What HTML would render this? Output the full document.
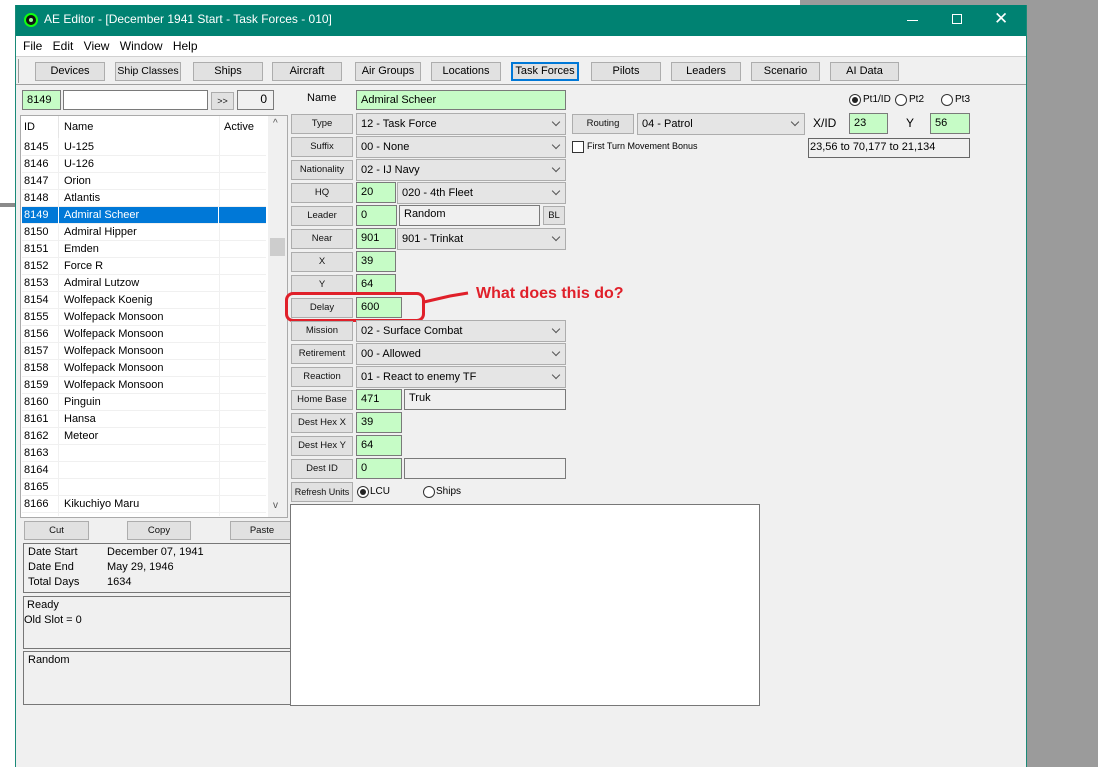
<!DOCTYPE html>
<html><head><meta charset="utf-8"><style>
*{box-sizing:border-box;margin:0;padding:0}
body{width:1098px;height:767px;position:relative;overflow:hidden;background:#fff;font-family:"Liberation Sans",sans-serif;font-size:11px;color:#000}
.a{position:absolute;white-space:nowrap}
.btn{position:absolute;white-space:nowrap;overflow:hidden;background:#e1e1e1;border:1px solid #adadad;text-align:center;font-size:9.5px;line-height:18px;color:#111}
.tb{position:absolute;white-space:nowrap;top:62px;height:19px;background:#e1e1e1;border:1px solid #adadad;text-align:center;font-size:11px;line-height:17px}
.g{position:absolute;background:#c6fcc6;border:1px solid #7a7a7a;padding-left:4px;font-size:11px;line-height:18px}
.cb{position:absolute;white-space:nowrap;background:#e5e5e5;border:1px solid #adadad;padding-left:4px;font-size:11px;line-height:20px}
.cb:after{content:"";position:absolute;right:6px;top:5px;width:5px;height:5px;border-right:1px solid #555;border-bottom:1px solid #555;transform:rotate(45deg)}
.tx{position:absolute;background:#f0f0f0;border:1px solid #7a7a7a;padding-left:4px;font-size:11px;line-height:17px}
.row{position:absolute;left:22px;width:244px;height:17px;border-bottom:1px solid #f0f0f0;font-size:11px;line-height:16px}
.row span{position:absolute}
.rad{position:absolute;width:12px;height:12px;border:1px solid #333;border-radius:50%;background:#fff}
.rad.on:after{content:"";position:absolute;left:2px;top:2px;width:6px;height:6px;border-radius:50%;background:#222}
.sm{position:absolute;white-space:nowrap;font-size:10px}
</style></head><body>
<div class="a" style="left:800px;top:0;width:298px;height:767px;background:#9b9b9b"></div>
<div class="a" style="left:0;top:203px;width:16px;height:4px;background:#8a8a8a"></div>
<div class="a" style="left:15px;top:5px;width:1012px;height:762px;background:#f0f0f0;border-left:1px solid #1a8a78;border-right:1px solid #1a8a78"></div>
<div class="a" style="left:16px;top:5px;width:1010px;height:31px;background:#008272"></div>
<div class="a" style="left:24px;top:13px;width:14px;height:14px;border-radius:50%;background:#111;border:2px solid #1f1"></div>
<div class="a" style="left:29px;top:18px;width:4px;height:4px;border-radius:50%;background:#9f9"></div>
<div class="a" style="left:44px;top:12px;color:#fff;font-size:12px">AE Editor - [December 1941 Start - Task Forces - 010]</div>
<div class="a" style="left:907px;top:20px;width:11px;height:1px;background:#fff"></div>
<div class="a" style="left:952px;top:14px;width:10px;height:10px;border:1px solid #fff"></div>
<div class="a" style="left:994px;top:9px;color:#fff;font-size:17px">✕</div>
<div class="a" style="left:16px;top:36px;width:1010px;height:20px;background:#fff"></div>
<div class="a" style="left:23px;top:39px;font-size:12px;word-spacing:7px">File Edit View Window Help</div>
<div class="a" style="left:16px;top:56px;width:1010px;height:1px;background:#d0d0d0"></div>
<div class="a" style="left:18px;top:59px;width:2px;height:24px;border-left:1px solid #999"></div>
<div class="tb" style="left:35px;width:70px">Devices</div>
<div class="tb" style="left:115px;width:66px;font-size:10.5px">Ship Classes</div>
<div class="tb" style="left:193px;width:70px">Ships</div>
<div class="tb" style="left:272px;width:70px">Aircraft</div>
<div class="tb" style="left:355px;width:66px">Air Groups</div>
<div class="tb" style="left:431px;width:70px">Locations</div>
<div class="tb" style="left:511px;width:68px;border:2px solid #0078d7;line-height:15px">Task Forces</div>
<div class="tb" style="left:591px;width:70px">Pilots</div>
<div class="tb" style="left:671px;width:70px">Leaders</div>
<div class="tb" style="left:751px;width:69px">Scenario</div>
<div class="tb" style="left:830px;width:69px">AI Data</div>
<div class="a" style="left:16px;top:84px;width:1010px;height:1px;background:#a0a0a0"></div>
<div class="g" style="left:22px;top:90px;width:39px;height:20px">8149</div>
<div class="a" style="left:63px;top:90px;width:145px;height:20px;background:#fff;border:1px solid #7a7a7a"></div>
<div class="btn" style="left:211px;top:92px;width:23px;height:18px;font-size:9px;line-height:16px">&gt;&gt;</div>
<div class="tx" style="left:237px;top:90px;width:37px;height:20px;text-align:right;padding-right:6px;font-size:12px;line-height:17px">0</div>
<div class="a" style="left:20px;top:115px;width:268px;height:403px;background:#fff;border:1px solid #aaa"></div>
<div class="a" style="left:268px;top:116px;width:19px;height:401px;background:#f0f0f0"></div>
<div class="a" style="left:270px;top:238px;width:15px;height:18px;background:#cdcdcd"></div>
<div class="a" style="left:273px;top:118px;font-size:10px;color:#555">^</div>
<div class="a" style="left:273px;top:500px;font-size:10px;color:#555">v</div>
<div class="a" style="left:24px;top:121px;font-size:11px">ID</div>
<div class="a" style="left:64px;top:121px;font-size:11px">Name</div>
<div class="a" style="left:224px;top:121px;font-size:11px">Active</div>
<div class="a" style="left:58px;top:116px;width:1px;height:22px;background:#e5e5e5"></div>
<div class="a" style="left:219px;top:116px;width:1px;height:400px;background:#f0f0f0"></div>
<div class="a" style="left:58px;top:138px;width:1px;height:378px;background:#f0f0f0"></div>
<div class="row" style="top:139px"><span style="left:2px">8145</span><span style="left:42px">U-125</span></div>
<div class="row" style="top:156px"><span style="left:2px">8146</span><span style="left:42px">U-126</span></div>
<div class="row" style="top:173px"><span style="left:2px">8147</span><span style="left:42px">Orion</span></div>
<div class="row" style="top:190px"><span style="left:2px">8148</span><span style="left:42px">Atlantis</span></div>
<div class="row" style="top:207px;background:#0078d7;color:#fff"><span style="left:2px">8149</span><span style="left:42px">Admiral Scheer</span><span style="left:196px;top:0;width:1px;height:17px;background:#fff"></span><span style="left:36px;top:0;width:1px;height:17px;background:#fff"></span></div>
<div class="row" style="top:224px"><span style="left:2px">8150</span><span style="left:42px">Admiral Hipper</span></div>
<div class="row" style="top:241px"><span style="left:2px">8151</span><span style="left:42px">Emden</span></div>
<div class="row" style="top:258px"><span style="left:2px">8152</span><span style="left:42px">Force R</span></div>
<div class="row" style="top:275px"><span style="left:2px">8153</span><span style="left:42px">Admiral Lutzow</span></div>
<div class="row" style="top:292px"><span style="left:2px">8154</span><span style="left:42px">Wolfepack Koenig</span></div>
<div class="row" style="top:309px"><span style="left:2px">8155</span><span style="left:42px">Wolfepack Monsoon</span></div>
<div class="row" style="top:326px"><span style="left:2px">8156</span><span style="left:42px">Wolfepack Monsoon</span></div>
<div class="row" style="top:343px"><span style="left:2px">8157</span><span style="left:42px">Wolfepack Monsoon</span></div>
<div class="row" style="top:360px"><span style="left:2px">8158</span><span style="left:42px">Wolfepack Monsoon</span></div>
<div class="row" style="top:377px"><span style="left:2px">8159</span><span style="left:42px">Wolfepack Monsoon</span></div>
<div class="row" style="top:394px"><span style="left:2px">8160</span><span style="left:42px">Pinguin</span></div>
<div class="row" style="top:411px"><span style="left:2px">8161</span><span style="left:42px">Hansa</span></div>
<div class="row" style="top:428px"><span style="left:2px">8162</span><span style="left:42px">Meteor</span></div>
<div class="row" style="top:445px"><span style="left:2px">8163</span></div>
<div class="row" style="top:462px"><span style="left:2px">8164</span></div>
<div class="row" style="top:479px"><span style="left:2px">8165</span></div>
<div class="row" style="top:496px"><span style="left:2px">8166</span><span style="left:42px">Kikuchiyo Maru</span></div>
<div class="btn" style="left:24px;top:521px;width:65px;height:19px">Cut</div>
<div class="btn" style="left:127px;top:521px;width:64px;height:19px">Copy</div>
<div class="btn" style="left:230px;top:521px;width:64px;height:19px">Paste</div>
<div class="a" style="left:23px;top:543px;width:270px;height:50px;border:1px solid #777;font-size:11px;line-height:15px;padding:1px 4px">Date Start<br>Date End<br>Total Days</div>
<div class="a" style="left:107px;top:545px;font-size:11px;line-height:15px">December 07, 1941<br>May 29, 1946<br>1634</div>
<div class="a" style="left:23px;top:596px;width:270px;height:53px;border:1px solid #777;font-size:11px;line-height:15px;padding:1px 0">&nbsp;Ready<br>Old Slot = 0</div>
<div class="a" style="left:23px;top:651px;width:270px;height:54px;border:1px solid #777;font-size:11px;padding:2px 4px">Random</div>
<div class="a" style="left:290px;top:504px;width:470px;height:202px;background:#fff;border:1px solid #777"></div>
<div class="a" style="left:307px;top:92px;font-size:11px">Name</div>
<div class="g" style="left:356px;top:90px;width:210px;height:20px">Admiral Scheer</div>
<div class="btn" style="left:291px;top:114px;width:62px;height:20px">Type</div><div class="cb" style="left:356px;top:113px;width:210px;height:22px">12 - Task Force</div>
<div class="btn" style="left:291px;top:137px;width:62px;height:20px">Suffix</div><div class="cb" style="left:356px;top:136px;width:210px;height:22px">00 - None</div>
<div class="btn" style="left:291px;top:160px;width:62px;height:20px">Nationality</div><div class="cb" style="left:356px;top:159px;width:210px;height:22px">02 - IJ Navy</div>
<div class="btn" style="left:291px;top:183px;width:62px;height:20px">HQ</div><div class="g" style="left:356px;top:182px;width:40px;height:21px">20</div><div class="cb" style="left:397px;top:182px;width:169px;height:22px">020 - 4th Fleet</div>
<div class="btn" style="left:291px;top:206px;width:62px;height:20px">Leader</div><div class="g" style="left:356px;top:205px;width:41px;height:21px">0</div><div class="tx" style="left:399px;top:205px;width:141px;height:21px">Random</div><div class="btn" style="left:543px;top:206px;width:22px;height:19px">BL</div>
<div class="btn" style="left:291px;top:229px;width:62px;height:20px">Near</div><div class="g" style="left:356px;top:228px;width:40px;height:21px">901</div><div class="cb" style="left:397px;top:228px;width:169px;height:22px">901 - Trinkat</div>
<div class="btn" style="left:291px;top:252px;width:62px;height:20px">X</div><div class="g" style="left:356px;top:251px;width:40px;height:21px">39</div>
<div class="btn" style="left:291px;top:275px;width:62px;height:20px">Y</div><div class="g" style="left:356px;top:274px;width:40px;height:21px">64</div>
<div class="btn" style="left:291px;top:298px;width:62px;height:20px">Delay</div><div class="g" style="left:356px;top:297px;width:46px;height:21px">600</div>
<div class="a" style="left:285px;top:292px;width:140px;height:30px;border:3px solid #e0202a;border-radius:8px"></div>
<svg class="a" style="left:420px;top:288px" width="60" height="20"><path d="M4 14 L30 8 L48 5" stroke="#e0202a" stroke-width="3" fill="none"/></svg>
<div class="a" style="left:476px;top:285px;color:#e0202a;font-weight:bold;font-size:16px">What does this do?</div>
<div class="btn" style="left:291px;top:321px;width:62px;height:20px">Mission</div><div class="cb" style="left:356px;top:320px;width:210px;height:22px">02 - Surface Combat</div>
<div class="btn" style="left:291px;top:344px;width:62px;height:20px">Retirement</div><div class="cb" style="left:356px;top:343px;width:210px;height:22px">00 - Allowed</div>
<div class="btn" style="left:291px;top:367px;width:62px;height:20px">Reaction</div><div class="cb" style="left:356px;top:366px;width:210px;height:22px">01 - React to enemy TF</div>
<div class="btn" style="left:291px;top:390px;width:62px;height:20px">Home Base</div><div class="g" style="left:356px;top:389px;width:46px;height:21px">471</div><div class="tx" style="left:404px;top:389px;width:162px;height:21px">Truk</div>
<div class="btn" style="left:291px;top:413px;width:62px;height:20px">Dest Hex X</div><div class="g" style="left:356px;top:412px;width:46px;height:21px">39</div>
<div class="btn" style="left:291px;top:436px;width:62px;height:20px">Dest Hex Y</div><div class="g" style="left:356px;top:435px;width:46px;height:21px">64</div>
<div class="btn" style="left:291px;top:459px;width:62px;height:20px">Dest ID</div><div class="g" style="left:356px;top:458px;width:46px;height:21px">0</div><div class="tx" style="left:404px;top:458px;width:162px;height:21px"></div>
<div class="btn" style="left:291px;top:482px;width:62px;height:20px;font-size:9px">Refresh Units</div>
<div class="rad on" style="left:357px;top:486px"></div><div class="sm" style="left:370px;top:486px">LCU</div>
<div class="rad" style="left:423px;top:486px"></div><div class="sm" style="left:436px;top:486px">Ships</div>
<div class="btn" style="left:572px;top:114px;width:62px;height:20px">Routing</div>
<div class="cb" style="left:637px;top:113px;width:168px;height:22px">04 - Patrol</div>
<div class="a" style="left:572px;top:141px;width:12px;height:12px;border:1px solid #333;background:#fff"></div>
<div class="sm" style="left:587px;top:141px;font-size:9px">First Turn Movement Bonus</div>
<div class="rad on" style="left:849px;top:94px"></div><div class="sm" style="left:863px;top:94px">Pt1/ID</div>
<div class="rad" style="left:895px;top:94px"></div><div class="sm" style="left:909px;top:94px">Pt2</div>
<div class="rad" style="left:941px;top:94px"></div><div class="sm" style="left:955px;top:94px">Pt3</div>
<div class="a" style="left:813px;top:116px;font-size:12px">X/ID</div>
<div class="g" style="left:849px;top:113px;width:39px;height:21px">23</div>
<div class="a" style="left:906px;top:116px;font-size:12px">Y</div>
<div class="g" style="left:930px;top:113px;width:40px;height:21px">56</div>
<div class="a" style="left:808px;top:138px;width:162px;height:20px;border:1px solid #666;font-size:11px;line-height:17px;padding-left:1px">23,56 to 70,177 to 21,134</div>
</body></html>
